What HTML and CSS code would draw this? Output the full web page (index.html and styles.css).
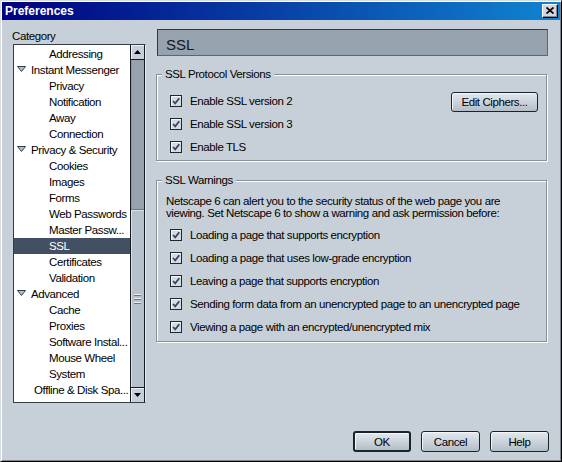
FILE: index.html
```html
<!DOCTYPE html>
<html>
<head>
<meta charset="utf-8">
<title>Preferences</title>
<link rel="stylesheet" href="styles.css">
</head>
<body>
<div class="window">
  <div class="titlebar">
    <span class="title">Preferences</span>
    <span class="close"><svg width="8" height="7" viewBox="0 0 8 7"><path d="M0.5 0.5L7.5 6.5M7.5 0.5L0.5 6.5" stroke="#000" stroke-width="1.7"/></svg></span>
  </div>
  <div class="main">
    <div class="leftcol">
      <div class="cat-label">Category</div>
      <div class="listbox">
        <ul class="tree">
          <li class="child">Addressing</li>
          <li class="parent"><svg class="twisty" width="9" height="6" viewBox="0 0 9 6"><polygon points="0.5,0.5 8.5,0.5 4.5,5.5" fill="#b4c0cc" stroke="#333d48"/></svg>Instant Messenger</li>
          <li class="child">Privacy</li>
          <li class="child">Notification</li>
          <li class="child">Away</li>
          <li class="child">Connection</li>
          <li class="parent"><svg class="twisty" width="9" height="6" viewBox="0 0 9 6"><polygon points="0.5,0.5 8.5,0.5 4.5,5.5" fill="#b4c0cc" stroke="#333d48"/></svg>Privacy &amp; Security</li>
          <li class="child">Cookies</li>
          <li class="child">Images</li>
          <li class="child">Forms</li>
          <li class="child">Web Passwords</li>
          <li class="child">Master Passw...</li>
          <li class="child selected">SSL</li>
          <li class="child">Certificates</li>
          <li class="child">Validation</li>
          <li class="parent"><svg class="twisty" width="9" height="6" viewBox="0 0 9 6"><polygon points="0.5,0.5 8.5,0.5 4.5,5.5" fill="#b4c0cc" stroke="#333d48"/></svg>Advanced</li>
          <li class="child">Cache</li>
          <li class="child">Proxies</li>
          <li class="child">Software Instal...</li>
          <li class="child">Mouse Wheel</li>
          <li class="child">System</li>
          <li class="top">Offline &amp; Disk Spa...</li>
        </ul>
        <div class="scrollbar">
          <div class="sb-btn"><svg width="7" height="4" viewBox="0 0 7 4"><polygon points="3.5,0 7,4 0,4" fill="#000"/></svg></div>
          <div class="sb-track">
            <div class="sb-space"></div>
            <div class="sb-thumb"><span class="grip"></span><span class="grip"></span><span class="grip"></span></div>
          </div>
          <div class="sb-btn"><svg width="7" height="4" viewBox="0 0 7 4"><polygon points="0,0 7,0 3.5,4" fill="#000"/></svg></div>
        </div>
      </div>
    </div>
    <div class="rightcol">
      <div class="header">SSL</div>
      <fieldset class="group g1">
        <legend>SSL Protocol Versions</legend>
        <div class="row">
          <span class="cb"><span class="box"><svg width="10" height="10" viewBox="0 0 10 10"><path d="M2 5L4.2 7.3L8.3 2.3" fill="none" stroke="#3a4858" stroke-width="1.8"/></svg></span>Enable SSL version 2</span>
          <button class="btn ciphers">Edit Ciphers...</button>
        </div>
        <div class="row"><span class="cb"><span class="box"><svg width="10" height="10" viewBox="0 0 10 10"><path d="M2 5L4.2 7.3L8.3 2.3" fill="none" stroke="#3a4858" stroke-width="1.8"/></svg></span>Enable SSL version 3</span></div>
        <div class="row"><span class="cb"><span class="box"><svg width="10" height="10" viewBox="0 0 10 10"><path d="M2 5L4.2 7.3L8.3 2.3" fill="none" stroke="#3a4858" stroke-width="1.8"/></svg></span>Enable TLS</span></div>
      </fieldset>
      <fieldset class="group g2">
        <legend>SSL Warnings</legend>
        <p class="desc">Netscape 6 can alert you to the security status of the web page you are<br>viewing. Set Netscape 6 to show a warning and ask permission before:</p>
        <div class="row"><span class="cb"><span class="box"><svg width="10" height="10" viewBox="0 0 10 10"><path d="M2 5L4.2 7.3L8.3 2.3" fill="none" stroke="#3a4858" stroke-width="1.8"/></svg></span>Loading a page that supports encryption</span></div>
        <div class="row"><span class="cb"><span class="box"><svg width="10" height="10" viewBox="0 0 10 10"><path d="M2 5L4.2 7.3L8.3 2.3" fill="none" stroke="#3a4858" stroke-width="1.8"/></svg></span>Loading a page that uses low-grade encryption</span></div>
        <div class="row"><span class="cb"><span class="box"><svg width="10" height="10" viewBox="0 0 10 10"><path d="M2 5L4.2 7.3L8.3 2.3" fill="none" stroke="#3a4858" stroke-width="1.8"/></svg></span>Leaving a page that supports encryption</span></div>
        <div class="row"><span class="cb"><span class="box"><svg width="10" height="10" viewBox="0 0 10 10"><path d="M2 5L4.2 7.3L8.3 2.3" fill="none" stroke="#3a4858" stroke-width="1.8"/></svg></span>Sending form data from an unencrypted page to an unencrypted page</span></div>
        <div class="row"><span class="cb"><span class="box"><svg width="10" height="10" viewBox="0 0 10 10"><path d="M2 5L4.2 7.3L8.3 2.3" fill="none" stroke="#3a4858" stroke-width="1.8"/></svg></span>Viewing a page with an encrypted/unencrypted mix</span></div>
      </fieldset>
    </div>
  </div>
  <div class="footer">
    <button class="btn ok">OK</button>
    <button class="btn cancel">Cancel</button>
    <button class="btn help">Help</button>
  </div>
</div>
</body>
</html>
```

FILE: styles.css
```css
html, body {
  margin: 0;
  padding: 0;
  background: #c7d0d9;
}
body {
  font-family: "Liberation Sans", Arial, sans-serif;
  font-size: 11.5px;
  letter-spacing: -0.4px;
  color: #000;
}
.window {
  width: 562px;
  height: 462px;
  box-sizing: border-box;
  border: 1px solid;
  border-color: #d8dde2 #000 #000 #d8dde2;
  box-shadow: inset 1px 1px 0 #fff, inset -1px -1px 0 #7d868f;
  padding: 1px;
  display: flex;
  flex-direction: column;
  background: #c7d0d9;
}
.titlebar {
  height: 18px;
  flex: none;
  background: linear-gradient(90deg, #000080, #1084d0);
  display: flex;
  align-items: center;
  justify-content: space-between;
  padding: 0 2px 0 3px;
}
.title {
  font-weight: bold;
  font-size: 12px;
  letter-spacing: 0;
  color: #fff;
}
.close {
  width: 16px;
  height: 14px;
  box-sizing: border-box;
  background: #d4d8dc;
  border: 1px solid;
  border-color: #fff #000 #000 #fff;
  box-shadow: inset -1px -1px 0 #808890;
  display: flex;
  align-items: center;
  justify-content: center;
  padding-bottom: 1px;
  padding-right: 1px;
}
.main {
  display: flex;
  gap: 10px;
  padding: 9px 10px 0 11px;
}
.leftcol {
  width: 133px;
  flex: none;
}
.cat-label {
  height: 15px;
  line-height: 15px;
  margin-left: -1px;
}
.listbox {
  height: 359px;
  box-sizing: border-box;
  border: 1px solid;
  border-color: #333d48 #e9edf1 #333d48 #333d48;
  background: #fff;
  display: flex;
}
.tree {
  list-style: none;
  margin: 0;
  padding: 1px 0 0 0;
  flex: 1;
  min-width: 0;
}
.tree li {
  height: 16px;
  line-height: 16px;
  white-space: nowrap;
  overflow: hidden;
}
.tree .child { padding-left: 35px; }
.tree .top { padding-left: 20px; }
.tree .parent {
  padding-left: 3px;
  display: flex;
  align-items: center;
}
.twisty {
  margin-right: 5px;
  margin-top: -2px;
  flex: none;
}
.tree .selected {
  background: #434f62;
  color: #fff;
}
.scrollbar {
  width: 15px;
  flex: none;
  box-sizing: border-box;
  border-left: 1px solid #141a20;
  border-right: 1px solid #141a20;
  display: flex;
  flex-direction: column;
  background: #98a2ac;
}
.sb-btn {
  height: 15px;
  flex: none;
  box-sizing: border-box;
  background: #c7d0d9;
  border-top: 1px solid #141a20;
  border-bottom: 1px solid #141a20;
  box-shadow: inset 1px 1px 0 #eef2f5;
  display: flex;
  align-items: center;
  justify-content: center;
}
.sb-btn:first-child { border-top: none; }
.sb-btn:last-child { border-bottom: none; }
.sb-track {
  flex: 1;
  display: flex;
  flex-direction: column;
  box-shadow: inset 1px 0 0 #8a949e;
}
.sb-space { flex: 1; }
.sb-thumb {
  height: 178px;
  box-sizing: border-box;
  background: #b7c1cb;
  border-top: 1px solid #6f7983;
  box-shadow: inset 1px 1px 0 #dbe1e7;
  display: flex;
  flex-direction: column;
  align-items: center;
  justify-content: center;
  gap: 2px;
}
.grip {
  width: 7px;
  height: 1px;
  background: #eef1f4;
  border-bottom: 1px solid #6c7680;
}
.rightcol {
  width: 392px;
  flex: none;
}
.header {
  height: 27px;
  margin-left: 1px;
  box-sizing: border-box;
  background: #96a2ae;
  border: 1px solid #2f3944;
  border-right-color: #5d6773;
  border-bottom-color: #5d6773;
  padding: 3px 0 0 8px;
  font-size: 15px;
  letter-spacing: 0;
  line-height: 23px;
  color: #10161e;
}
.group {
  margin: 0;
  border: 1px solid #87919b;
  box-shadow: 1px 1px 0 #fff, inset 1px 1px 0 #fff;
  padding: 8px 0 2px 9px;
  min-width: 0;
}
.group legend {
  margin-left: -4px;
  padding: 0 3px;
  line-height: 14px;
  background: #c7d0d9;
}
.g1 { margin-top: 11px; width: 391px; box-sizing: border-box; }
.g2 { margin-top: 12px; width: 391px; box-sizing: border-box; padding-bottom: 3px; }
.row {
  height: 23px;
  display: flex;
  align-items: center;
  padding-left: 4px;
}
.cb {
  display: flex;
  align-items: center;
  white-space: nowrap;
}
.box {
  width: 12px;
  height: 12px;
  box-sizing: border-box;
  border: 1px solid #1e2630;
  background: #d3dbe3;
  box-shadow: inset 1px 1px 0 #f4f7fa;
  margin-right: 8px;
  display: flex;
  align-items: center;
  justify-content: center;
}
.desc {
  margin: 0 0 4px 0;
  line-height: 12px;
  white-space: nowrap;
}
.btn {
  font-family: inherit;
  font-size: 11.5px;
  letter-spacing: -0.4px;
  color: #000;
  height: 21px;
  box-sizing: border-box;
  border: 1px solid #1a222a;
  border-radius: 3px;
  background: linear-gradient(#e3e8ee, #b4bec8);
  box-shadow: inset 1px 1px 0 #f4f6f8;
  padding: 0;
}
.ciphers {
  width: 87px;
  height: 20px;
  margin-left: auto;
  margin-right: 8px;
  align-self: flex-start;
  margin-top: 3px;
}
.footer {
  margin-top: auto;
  display: flex;
  justify-content: flex-end;
  gap: 10px;
  padding: 0 11px 8px 0;
}
.ok { width: 58px; border-width: 2px; }
.cancel { width: 59px; }
.help { width: 59px; }
```
